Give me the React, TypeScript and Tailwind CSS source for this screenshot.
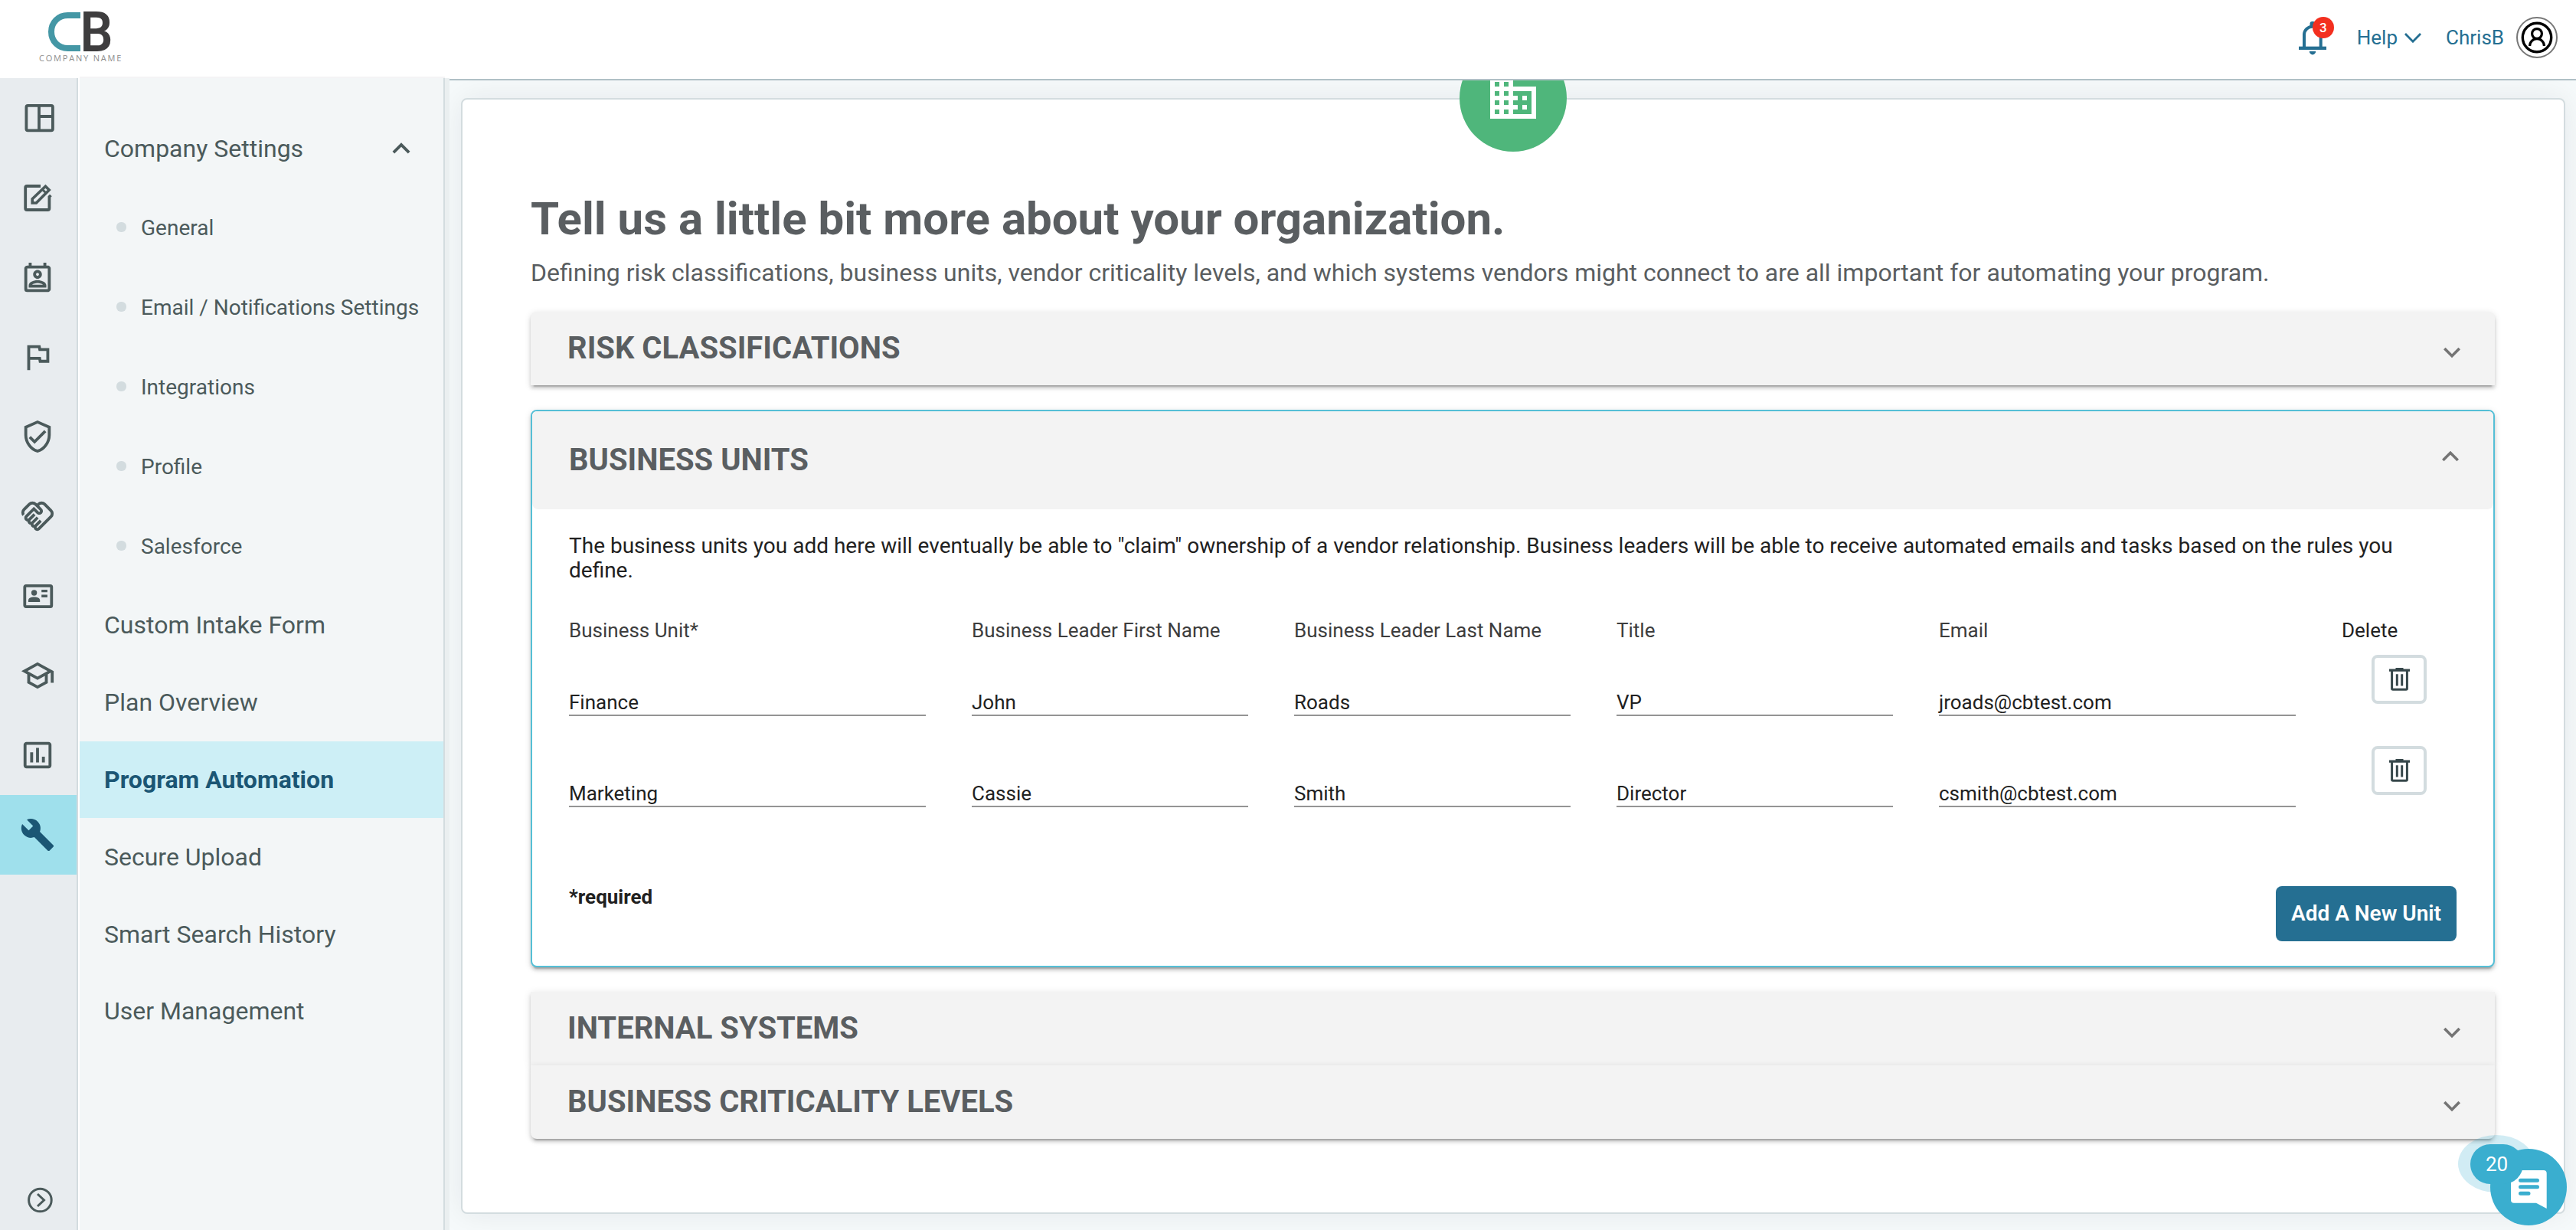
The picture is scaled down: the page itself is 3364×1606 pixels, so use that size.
import type { ComponentType, ReactNode } from 'react';
import {
  MdBuild,
  MdDomain,
  MdExpandLess,
  MdExpandMore,
  MdInsertChartOutlined,
  MdOutlineFlag,
  MdOutlineHandshake,
  MdOutlinePermContactCalendar,
  MdOutlineSchool,
  MdOutlineVerifiedUser,
} from 'react-icons/md';

type IconProps = { className?: string };

function DashboardIcon({ className }: IconProps) {
  return (
    <svg viewBox="0 0 46 46" className={className} fill="none" stroke="currentColor" strokeWidth="3.8">
      <rect x="8.4" y="6.9" width="34.5" height="32.4" rx="2" />
      <path d="M25 7v32M25 21h18" />
    </svg>
  );
}

function EditIcon({ className }: IconProps) {
  return (
    <svg viewBox="0 0 46 46" className={className} fill="none" stroke="currentColor" strokeWidth="3.8">
      <path d="M27 8H9.2a2 2 0 0 0-2 2v27a2 2 0 0 0 2 2h27.2a2 2 0 0 0 2-2V22l2-2" />
      <path d="M16.2 30v-5.2L33.4 8.2l4.8 4.8L21.4 30z" strokeWidth="3.6" />
      <path d="M29.5 12.5l4.5 4.5" strokeWidth="3" />
    </svg>
  );
}

function CalendarIcon({ className }: IconProps) {
  return <MdOutlinePermContactCalendar className={`${className} mt-[3px]`} />;
}

function CardIcon({ className }: IconProps) {
  return (
    <svg viewBox="0 0 46 46" className={className} fill="currentColor">
      <rect x="6.3" y="9.9" width="35" height="27.2" rx="1.6" fill="none" stroke="currentColor" strokeWidth="3.8" />
      <circle cx="18.6" cy="19" r="3.7" />
      <path d="M11 31v-2.2c0-3 4-4.2 7.6-4.2s7.6 1.2 7.6 4.2V31z" />
      <path d="M28.2 14.9h7.7v3.4h-7.7zM28.2 21.6h7.7V25h-7.7z" />
    </svg>
  );
}

function TrashIcon() {
  return (
    <svg viewBox="0 0 27 30" className="h-[30px] w-[27px]" fill="none" stroke="#36474a" strokeWidth="3">
      <path d="M8.5 0h10v1.5H27v3.2H0V1.5h8.5z" fill="#36474a" stroke="none" />
      <path d="M3.6 4v23a1.3 1.3 0 0 0 1.3 1.3h17.2a1.3 1.3 0 0 0 1.3-1.3V4" />
      <path d="M10.3 8.3v15.2M16.7 8.3v15.2" />
    </svg>
  );
}

const rail: ComponentType<IconProps>[] = [
  DashboardIcon,
  EditIcon,
  CalendarIcon,
  MdOutlineFlag,
  MdOutlineVerifiedUser,
  MdOutlineHandshake,
  CardIcon,
  MdOutlineSchool,
  MdInsertChartOutlined,
];

const companySettings = ['General', 'Email / Notifications Settings', 'Integrations', 'Profile', 'Salesforce'];
const menu = [
  'Custom Intake Form',
  'Plan Overview',
  'Program Automation',
  'Secure Upload',
  'Smart Search History',
  'User Management',
];

const columns = ['Business Unit*', 'Business Leader First Name', 'Business Leader Last Name', 'Title', 'Email'];
const units = [
  ['Finance', 'John', 'Roads', 'VP', 'jroads@cbtest.com'],
  ['Marketing', 'Cassie', 'Smith', 'Director', 'csmith@cbtest.com'],
];

const grid = 'grid grid-cols-[466px_361px_361px_361px_466px_150px] gap-x-[60px]';
const elevation =
  'shadow-[0_6px_2px_-4px_rgba(0,0,0,0.2),0_4px_4px_0_rgba(0,0,0,0.14),0_2px_10px_0_rgba(0,0,0,0.12)]';

function Header() {
  return (
    <header className="flex h-[102px] shrink-0 justify-between bg-white">
      <div className="flex w-[120px] flex-col pl-[51px] pt-4">
        <svg viewBox="0 0 84 52" className="ml-3 h-[52px] w-[84px] overflow-visible">
          <path d="M42 4H25.5C13 4 4 13.5 4 25.5S13 47 25.5 47H42" fill="none" stroke="#4497a5" strokeWidth="8" />
          <text
            x="41.5"
            y="51"
            fontFamily="Roboto"
            fontWeight="600"
            fontSize="71.5"
            textLength="43"
            lengthAdjust="spacingAndGlyphs"
            fill="#3e3d3e"
          >
            B
          </text>
        </svg>
        <div className="whitespace-nowrap font-['Open_Sans',sans-serif] text-[11px] leading-4 tracking-[1.8px] text-[#8d8d8d]">
          COMPANY NAME
        </div>
      </div>
      <div className="flex h-[98px] items-center pr-6 text-[26px] leading-8 text-[#256f92]">
        <div className="relative mr-[40px] h-[44px] w-[36px]">
          <svg viewBox="0 0 36 44" className="mt-[1px] h-[44px] w-[36px]" fill="currentColor">
            <path d="M7 33V16.5a10.9 10.9 0 0 1 21.7 0V33" fill="none" stroke="currentColor" strokeWidth="4" />
            <rect x="14.5" y="0" width="7" height="7" rx="3" />
            <rect x="0" y="32.7" width="36" height="4.3" />
            <path d="M13.8 39h8.4a4.2 4.4 0 0 1-8.4 0z" />
          </svg>
          <span className="absolute -top-[5px] left-[18px] flex size-[28px] items-center justify-center rounded-full bg-[#f32f1f] text-[17px] font-medium text-white">
            3
          </span>
        </div>
        <span>Help</span>
        <svg
          viewBox="0 0 22 13"
          className="ml-[9px] mr-[32px] h-[13px] w-[22px]"
          fill="none"
          stroke="currentColor"
          strokeWidth="2.8"
        >
          <path d="M1 1l10 10.2L21 1" />
        </svg>
        <span>ChrisB</span>
        <svg viewBox="0 0 54 54" className="ml-4 h-[54px] w-[54px]" fill="none" stroke="#000">
          <circle cx="27" cy="27" r="26" stroke="#777" strokeWidth="2" />
          <circle cx="27" cy="27" r="18.7" strokeWidth="3.4" />
          <circle cx="27" cy="22" r="6.4" strokeWidth="3.2" />
          <path d="M17.6 38a9.4 9.4 0 0 1 18.8 0" strokeWidth="3.2" />
        </svg>
      </div>
    </header>
  );
}

function Rail() {
  return (
    <nav className="flex w-[102px] shrink-0 flex-col border-r-2 border-[#d3dbdf] bg-[#e8ecef] text-[#4b5a5b]">
      {rail.map((Icon, i) => (
        <div key={i} className="flex h-[104px] shrink-0 items-center pl-[26px]">
          <Icon className="size-[46px]" />
        </div>
      ))}
      <div className="flex h-[104px] shrink-0 items-center bg-[#9fe0ec] pl-[26px] text-[#1b5674]">
        <MdBuild className="size-[46px]" />
      </div>
      <svg
        viewBox="0 0 34 34"
        className="mb-[22px] ml-[35px] mt-auto size-[34px]"
        fill="none"
        stroke="currentColor"
        strokeWidth="3"
      >
        <circle cx="17.4" cy="17" r="14.8" />
        <path d="M14 9l8.5 8-8.5 8" />
      </svg>
    </nav>
  );
}

function SidePanel() {
  return (
    <aside className="ml-[2px] flex w-[477px] shrink-0 flex-col border-r-2 border-[#d3dcdf] bg-[#f3f6f7] text-[32px] leading-10 text-[#4b5a5b] shadow-[0_-2px_0_#f4f4f5,6px_0_0_#eaeff0]">
      <div className="mt-[41px] flex h-[102px] items-center justify-between pl-8 pr-8">
        <span>Company Settings</span>
        <MdExpandLess className="size-[46px]" />
      </div>
      {companySettings.map((label) => (
        <div key={label} className="flex h-[104px] items-center whitespace-nowrap pl-12 text-[28px]">
          <span className="mb-[2px] mr-[19px] size-[13px] rounded-[6px] bg-[#d3dcdf]" />
          <span className="mt-[1px]">{label}</span>
        </div>
      ))}
      <div className="mt-[1px]">
        {menu.map((label) =>
          label === 'Program Automation' ? (
            <div key={label} className="flex h-[100.8px] items-center bg-[#cdeff6] pl-8 font-bold text-[#1b5674]">
              {label}
            </div>
          ) : (
            <div key={label} className="flex h-[100.8px] items-center pl-8">
              {label}
            </div>
          ),
        )}
      </div>
    </aside>
  );
}

function ClosedPanel({ title, className }: { title: string; className: string }) {
  return (
    <div className={`${elevation} ${className} flex h-24 items-center justify-between bg-[#f3f3f3] pl-12 pr-[34px]`}>
      <h2 className="text-[40px] font-bold leading-[48px] text-[#5a5e61]">{title}</h2>
      <MdExpandMore className="mt-[10px] size-[44px] text-[#747474]" />
    </div>
  );
}

function Field({ children }: { children: ReactNode }) {
  return <div className="mt-[62px] h-[34px] border-b-2 border-[#949494] leading-8">{children}</div>;
}

function BusinessUnits() {
  return (
    <section className={`${elevation} my-8 overflow-hidden rounded-lg border-2 border-[#55bfd6] bg-white`}>
      <div className="flex h-32 items-center justify-between rounded-b-lg bg-[#f3f3f3] pl-12 pr-[34px]">
        <h2 className="text-[40px] font-bold leading-[48px] text-[#5a5e61]">BUSINESS UNITS</h2>
        <MdExpandLess className="mb-[10px] size-[44px] text-[#747474]" />
      </div>
      <div className="px-12 pb-8 pt-8 text-[26px] leading-8 text-[#212121]">
        <p className="text-[28px] leading-8">
          The business units you add here will eventually be able to "claim" ownership of a vendor relationship. Business
          leaders will be able to receive automated emails and tasks based on the rules you define.
        </p>
        <div className={`${grid} mt-[46px] text-[#3d3d3d]`}>
          {columns.map((c) => (
            <div key={c}>{c}</div>
          ))}
          <div className="text-[#212121]">Delete</div>
        </div>
        {units.map((row) => (
          <div key={row[0]} className={`${grid} h-[119px]`}>
            {row.map((value) => (
              <Field key={value}>{value}</Field>
            ))}
            <button className="ml-[39px] mt-4 flex h-[64px] w-[72px] items-center justify-center rounded-lg border-4 border-[#d3dcdf] bg-white">
              <TrashIcon />
            </button>
          </div>
        ))}
        <div className="mt-[78px] flex items-start justify-between">
          <span className="font-bold">*required</span>
          <button className="mt-[2px] h-[72px] w-[236px] rounded-lg bg-[#256f92] text-[28px] font-semibold text-white">
            Add A New Unit
          </button>
        </div>
      </div>
    </section>
  );
}

function ChatButton() {
  return (
    <div className="absolute bottom-[6px] right-3 size-[100px] rounded-full">
      <div className="absolute -left-[42px] -top-[18px] h-[75px] w-[100px] rounded-[50%] bg-[#3aaecf]/23" />
      <div className="absolute inset-0 rounded-full bg-[#3aaecf]" />
      <svg viewBox="0 0 47 50" className="absolute left-[27px] top-[28px] h-[50px] w-[47px]">
        <path d="M4 0h38.7a4 4 0 0 1 4 4v46L33 42.7H4a4 4 0 0 1-4-4V4a4 4 0 0 1 4-4z" fill="#fff" />
        <path
          d="M12.5 13.3h22M12.5 21.8h22M12.5 30.2h10.5"
          stroke="#3aaecf"
          strokeWidth="5"
          strokeLinecap="round"
        />
      </svg>
      <div className="absolute -left-[26px] -top-[6px] flex h-[52px] w-[69px] items-center justify-center rounded-full bg-[#3aaecf] text-[26px] text-white">
        20
      </div>
    </div>
  );
}

export default function App() {
  return (
    <div className="relative flex h-[1606px] w-full flex-col overflow-hidden bg-white font-[Roboto,sans-serif]">
      <Header />
      <div className="flex min-h-0 flex-1">
        <Rail />
        <SidePanel />
        <main className="ml-[6px] mt-[1px] min-w-0 flex-1 overflow-hidden border-t-2 border-[#b0c0c6] bg-[#f6fafb] pl-[15px] pr-[14px] pt-[23px]">
          <div className="flex h-[1457px] flex-col rounded-lg border-2 border-[#d3dcdf] bg-white pl-[89px] pr-[90px] shadow-[0_0_40px_rgba(0,30,40,0.08)]">
            <div className="-mt-[72px] flex size-[140px] shrink-0 items-center justify-center self-center rounded-full bg-[#4fb67b]">
              <MdDomain className="size-[72px] text-white" />
            </div>
            <h1 className="mt-[52px] text-[60px] font-bold leading-[72px] text-[#5a5e61]">
              Tell us a little bit more about your organization.
            </h1>
            <p className="mb-[31px] mt-[14px] text-[32px] leading-10 text-[#5a5e61]">
              Defining risk classifications, business units, vendor criticality levels, and which systems vendors might
              connect to are all important for automating your program.
            </p>
            <ClosedPanel title="RISK CLASSIFICATIONS" className="rounded-t-lg" />
            <BusinessUnits />
            <ClosedPanel title="INTERNAL SYSTEMS" className="" />
            <ClosedPanel title="BUSINESS CRITICALITY LEVELS" className="rounded-b-lg" />
          </div>
        </main>
      </div>
      <ChatButton />
    </div>
  );
}
